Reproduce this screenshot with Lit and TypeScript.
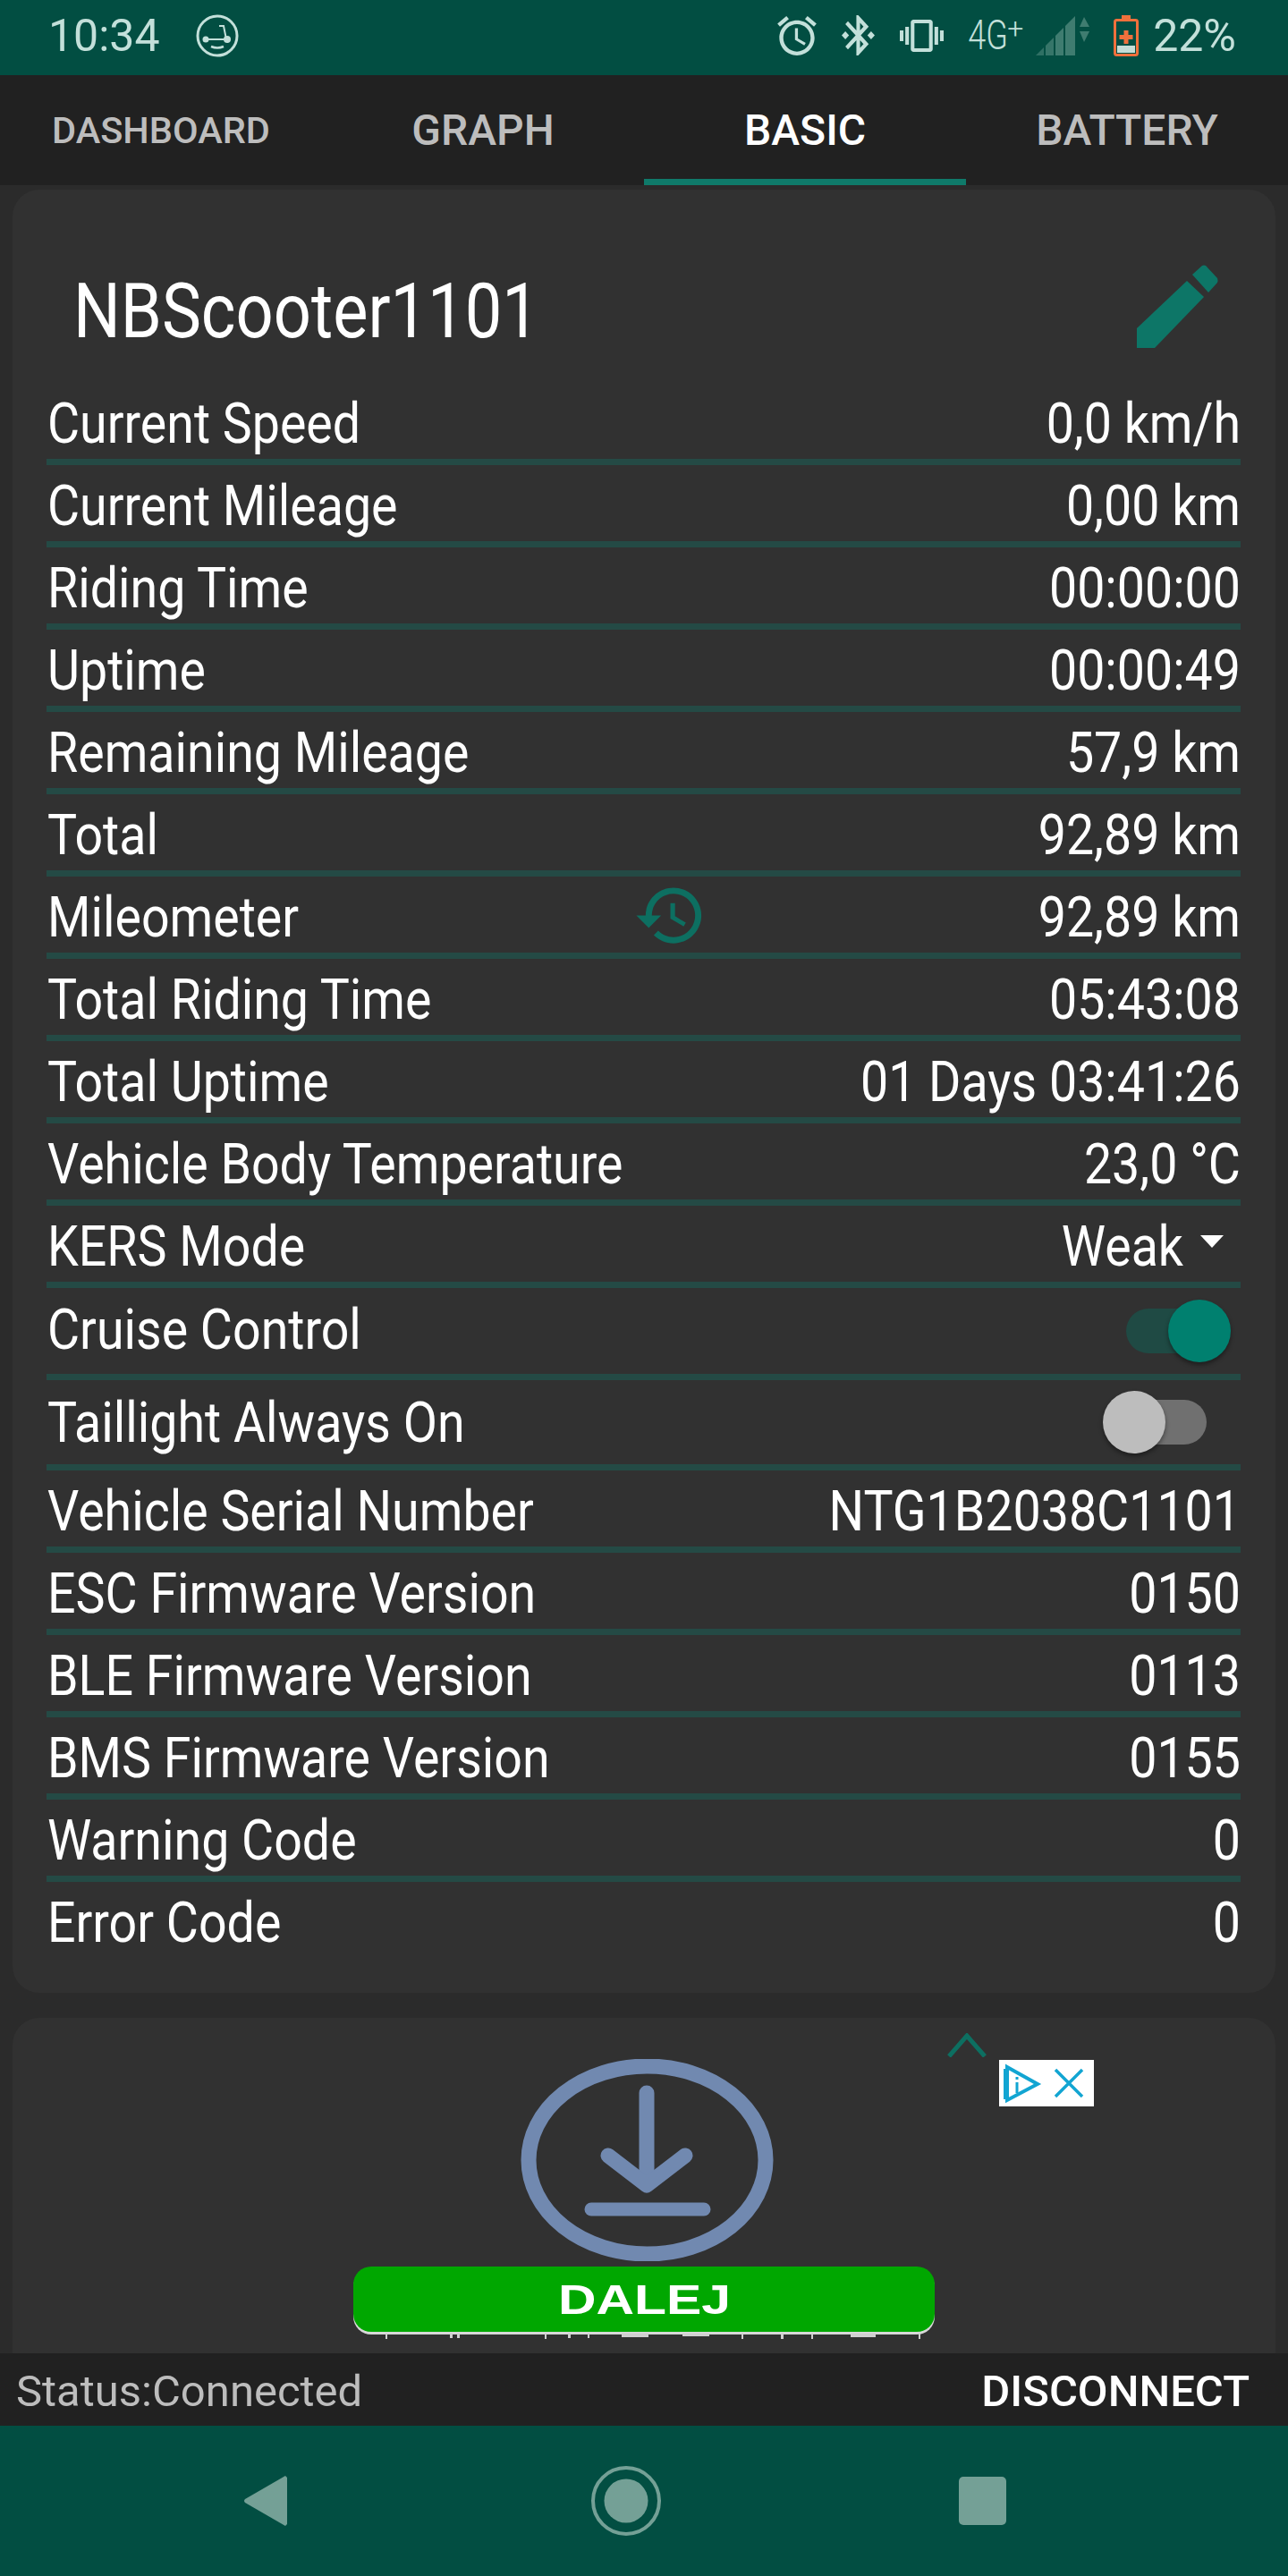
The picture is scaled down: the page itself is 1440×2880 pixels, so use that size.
import { LitElement, css, html, svg } from "lit";
import { customElement } from "lit/decorators.js";

interface Row {
    label: string;
    value?: string;
    kind?: "select" | "on" | "off";
    history?: boolean;
}

const ROWS: Row[] = [
    { label: "Current Speed", value: "0,0 km/h" },
    { label: "Current Mileage", value: "0,00 km" },
    { label: "Riding Time", value: "00:00:00" },
    { label: "Uptime", value: "00:00:49" },
    { label: "Remaining Mileage", value: "57,9 km" },
    { label: "Total", value: "92,89 km" },
    { label: "Mileometer", value: "92,89 km", history: true },
    { label: "Total Riding Time", value: "05:43:08" },
    { label: "Total Uptime", value: "01 Days 03:41:26" },
    { label: "Vehicle Body Temperature", value: "23,0 °C" },
    { label: "KERS Mode", value: "Weak", kind: "select" },
    { label: "Cruise Control", kind: "on" },
    { label: "Taillight Always On", kind: "off" },
    { label: "Vehicle Serial Number", value: "NTG1B2038C1101" },
    { label: "ESC Firmware Version", value: "0150" },
    { label: "BLE Firmware Version", value: "0113" },
    { label: "BMS Firmware Version", value: "0155" },
    { label: "Warning Code", value: "0" },
    { label: "Error Code", value: "0" },
];

const TABS = ["DASHBOARD", "GRAPH", "BASIC", "BATTERY"];

const scooterIcon = svg`<svg class="scooter" width="48" height="48" viewBox="0 0 48 48" fill="none" stroke="currentColor">
    <circle cx="24" cy="24" r="22" stroke-width="3"/>
    <path d="M26 13h5l3 15M11 28h23" stroke-width="2"/>
    <circle cx="11" cy="28" r="3.5" fill="currentColor" stroke="none"/>
    <circle cx="35" cy="28" r="4" fill="currentColor" stroke="none"/>
    <path d="M17 36q7 3 14 0" stroke-width="2.5"/>
</svg>`;

const alarmIcon = svg`<svg width="44" height="44" viewBox="2 1.86 20 20.14" fill="currentColor"><path d="M22 5.72l-4.6-3.86-1.29 1.53 4.6 3.86L22 5.72zM7.88 3.39L6.6 1.86 2 5.71l1.29 1.53 4.59-3.85zM12.5 8H11v6l4.75 2.85.75-1.23-4-2.37V8zM12 4c-4.97 0-9 4.03-9 9s4.03 9 9 9 9-4.03 9-9-4.03-9-9-9zm0 16c-3.87 0-7-3.13-7-7s3.13-7 7-7 7 3.13 7 7-3.13 7-7 7z"/></svg>`;

const bluetoothIcon = svg`<svg width="37" height="45" viewBox="3 2 18 20" preserveAspectRatio="none" fill="currentColor"><path d="M7 12l-2-2-2 2 2 2 2-2zm10.71-4.29L12 2h-1v7.59L6.41 5 5 6.41 10.59 12 5 17.59 6.41 19 11 14.41V22h1l5.71-5.71-4.3-4.29 4.3-4.29zM13 5.83l1.88 1.88L13 9.59V5.83zm1.88 10.46L13 18.17v-3.76l1.88 1.88zM19 10l-2 2 2 2 2-2-2-2z"/></svg>`;

const vibrateIcon = svg`<svg width="49" height="36" viewBox="0 3 24 18" preserveAspectRatio="none" fill="currentColor"><path d="M0 15h2V9H0v6zm3 2h2V7H3v10zm19-8v6h2V9h-2zm-3 8h2V7h-2v10zM16.5 3h-9C6.67 3 6 3.67 6 4.5v15c0 .83.67 1.5 1.5 1.5h9c.83 0 1.5-.67 1.5-1.5v-15c0-.83-.67-1.5-1.5-1.5zM16 19H8V5h8v14z"/></svg>`;

const signalIcon = svg`<svg width="61" height="44" viewBox="0 0 61 44">
    <g fill="#3f7c70">
        <path d="M0 44 9 35V44Z" opacity=".75"/>
        <path d="M11 33 20 24V44H11Z" opacity=".85"/>
        <path d="M22 22 31 13V44H22Z"/>
        <path d="M33 11 44 0V44H33Z"/>
        <path d="M54 1 60 12H49Z"/>
        <path d="M54 29 60 17H49Z"/>
    </g>
</svg>`;

const batteryIcon = svg`<svg width="28" height="46" viewBox="0 0 28 46">
    <path d="M9 0h10v4H9z" fill="#f0703c"/>
    <rect x="1.5" y="5.5" width="25" height="39" rx="2" fill="none" stroke="#f0703c" stroke-width="3"/>
    <rect x="4" y="34" width="20" height="8" fill="#c5ddd7"/>
    <path d="M11.5 17h5v5h5v5h-5v5h-5v-5h-5v-5h5z" fill="#f0703c"/>
</svg>`;

const editIcon = svg`<svg class="edit" width="91" height="93" viewBox="0 0 91 93" fill="#0d7667">
    <path d="M0 71 56 18 75 36 20 93H0Z"/>
    <path d="M62 11 73 1Q75 0 77 1L90 15Q91 18 90 20L80 31Z"/>
</svg>`;

const historyIcon = svg`<svg class="history" width="83" height="83" viewBox="0 0 24 24" fill="#0d6f61"><path d="M13 3c-4.97 0-9 4.03-9 9H1l3.89 3.89.07.14L9 12H6c0-3.87 3.13-7 7-7s7 3.13 7 7-3.13 7-7 7c-1.93 0-3.68-.79-4.94-2.06l-1.42 1.42C8.27 19.99 10.51 21 13 21c4.97 0 9-4.03 9-9s-4.03-9-9-9zm-1 5v5l4.28 2.54.72-1.21-3.5-2.08V8H12z"/></svg>`;

const downloadIcon = svg`<svg class="download" width="283" height="226" viewBox="0 0 283 226" fill="none" stroke="#7189b0" stroke-linecap="round">
    <ellipse cx="141.500" cy="113" rx="132.500" ry="105" stroke-width="17"/>
    <path d="M141 38V140" stroke-width="17"/>
    <path d="M98 108 141 141 184 108" stroke-width="17" stroke-linejoin="round"/>
    <path d="M79 168H205" stroke-width="15"/>
</svg>`;

const adChoices = svg`<svg width="106" height="52" viewBox="0 0 106 52" fill="none" stroke="#12a5d2" stroke-width="4">
    <path d="M9 8 43 27 9 45Z"/>
    <path d="M8 10V44" stroke-width="6"/>
    <path d="M20 25V37M20 19V22" stroke-width="3"/>
    <path d="M63 11 93 41M93 11 63 41" stroke-width="3.500"/>
</svg>`;

// scan-line leftovers under the green ad button
const adTicks = svg`<svg class="ticks" width="650" height="7" viewBox="0 0 650 7" fill="#d0d0d0">
    <path d="M36 0h2v6h-2zM108 0h3v5h-3zM116 0h3v5h-3zM214 0h2v6h-2zM240 0h3v5h-3zM262 0h2v5h-2zM300 0h30v4h-30zM368 0h30v3h-30zM434 0h2v6h-2zM478 0h3v6h-3zM512 0h2v6h-2zM556 0h28v4h-28zM632 0h2v6h-2z"/>
</svg>`;

@customElement("app-root")
export class AppRoot extends LitElement {
    static styles = css`
        :host {
            display: block;
            width: 1440px;
            height: 2880px;
            background: #2b2b2b;
            font-family: Roboto, "Liberation Sans", sans-serif;
            overflow: hidden;
        }

        .page {
            display: flex;
            flex-direction: column;
            height: 2880px;
        }

        .status {
            display: flex;
            align-items: center;
            height: 84px;
            flex: none;
            padding: 0 58px 5px 54px;
            box-sizing: border-box;
            background: #024e42;
            color: #c3e0da;
            font-size: 50px;
        }

        .status svg {
            display: block;
            flex: none;
        }

        .scooter {
            margin-left: 40px;
        }

        .spacer {
            flex: 1;
        }

        .status .gap28 {
            margin-left: 28px;
        }

        .net {
            position: relative;
            width: 67px;
            margin-left: 27px;
            font-size: 36px;
            font-weight: 300;
            line-height: 40px;
        }

        .net span {
            display: inline-block;
            transform: scaleY(1.28);
        }

        .net sup {
            position: absolute;
            left: 44px;
            top: -4px;
            font-size: 32px;
            line-height: 32px;
        }

        .status .signal {
            margin-left: 9px;
        }

        .status .battery {
            margin-left: 26px;
        }

        .level {
            margin-left: 16px;
        }

        .tabs {
            display: grid;
            grid-template-columns: repeat(4, 360px);
            flex: none;
            height: 123px;
            background: #212121;
        }

        .tab {
            display: flex;
            align-items: center;
            justify-content: center;
            box-sizing: border-box;
            color: #bdbdbd;
            font-size: 48px;
            font-weight: 500;
        }

        .tab.small {
            font-size: 41.500px;
        }

        .tab.active {
            color: #fff;
            border-bottom: 7px solid #0f7a6a;
            padding-top: 7px;
        }

        main {
            flex: 1;
            display: flex;
            flex-direction: column;
            gap: 28px;
            padding: 5px 14px 0;
        }

        .card {
            background: #313131;
            border-radius: 30px;
        }

        .info {
            height: 2016px;
            box-sizing: border-box;
            padding: 0 39px 0 38px;
        }

        .head {
            display: flex;
            align-items: center;
            justify-content: space-between;
            height: 216px;
            padding: 44px 25px 0 30px;
            box-sizing: border-box;
        }

        .name {
            color: #fff;
            font-size: 74px;
            display: inline-block;
            margin-top: 10px;
            transform: scaleY(1.15);
        }

        .row {
            position: relative;
            display: flex;
            align-items: center;
            justify-content: space-between;
            height: 92px;
            box-sizing: border-box;
            border-bottom: 7px solid #244a45;
            color: #fff;
            font-size: 55.500px;
        }

        .row.on {
            height: 103px;
        }

        .row.off {
            height: 101px;
        }

        .row.last {
            height: 85px;
            border-bottom: 0;
        }

        .txt {
            display: inline-block;
            margin-top: 5px;
            padding-left: 1px;
            transform: scaleY(1.15);
        }

        .row.on .txt {
            margin-top: -3px;
        }

        .row.off .txt {
            margin-top: 0;
        }

        .val {
            padding: 0;
        }

        .pick {
            display: flex;
            align-items: center;
            gap: 19px;
            padding-right: 19px;
        }

        .caret {
            width: 0;
            height: 0;
            margin-top: -6px;
            border-left: 13px solid transparent;
            border-right: 13px solid transparent;
            border-top: 14px solid #fff;
        }

        .history {
            position: absolute;
            left: 656px;
            top: 2px;
        }

        .switch {
            position: relative;
            width: 101px;
            height: 50px;
            border-radius: 25px;
        }

        .switch.on {
            margin-right: 27px;
            background: #1f4a44;
        }

        .switch.off {
            margin-right: 38px;
            background: #707070;
            width: 100px;
        }

        .knob {
            position: absolute;
            top: -10px;
            width: 70px;
            height: 70px;
            border-radius: 50%;
            box-shadow: 0 3px 5px rgba(0, 0, 0, 0.4);
        }

        .on .knob {
            right: -16px;
            background: #00806f;
        }

        .off .knob {
            left: -16px;
            background: #bdbdbd;
        }

        .ad {
            position: relative;
            flex: 1;
            display: flex;
            flex-direction: column;
            align-items: center;
            padding: 46px 0 0 0;
            border-radius: 30px 30px 0 0;
        }

        .download {
            display: block;
            margin-left: 6px;
        }

        .dalej {
            position: relative;
            display: flex;
            align-items: center;
            justify-content: center;
            width: 650px;
            height: 73px;
            margin-top: 6px;
            border-radius: 20px;
            background: #00a700;
            box-shadow: 0 3px 0 #d8d8d8;
            color: #fff;
            font-family: "Liberation Sans", sans-serif;
            font-size: 46px;
            font-weight: 700;
        }

        .dalej span {
            display: inline-block;
            transform: scaleX(1.28);
        }

        .ticks {
            position: absolute;
            left: 0;
            top: 75px;
        }

        .chevron {
            position: absolute;
            left: 1045px;
            top: 17px;
        }

        .badge {
            position: absolute;
            left: 1103px;
            top: 47px;
            width: 106px;
            height: 52px;
            background: #fff;
        }

        .badge svg {
            display: block;
        }

        .foot {
            display: flex;
            align-items: center;
            justify-content: space-between;
            flex: none;
            height: 81px;
            padding: 3px 43px 0 18px;
            box-sizing: border-box;
            background: #212121;
            color: #bdbdbd;
            font-size: 49px;
        }

        .foot b {
            color: #fff;
            font-size: 49px;
            font-weight: 500;
        }

        .nav {
            display: flex;
            align-items: center;
            flex: none;
            height: 168px;
            padding-left: 273px;
            box-sizing: border-box;
            background: #024e42;
        }

        .nav svg {
            display: block;
            flex: none;
        }

        .nav .home {
            margin-left: 340px;
        }

        .nav .recent {
            margin-left: 333px;
        }
    `;

    private renderValue(row: Row) {
        if (row.kind === "select") {
            return html`<div class="pick"><span class="txt">${row.value}</span><span class="caret"></span></div>`;
        }
        if (row.kind === "on" || row.kind === "off") {
            return html`<div class="switch ${row.kind}"><div class="knob"></div></div>`;
        }
        return html`<span class="txt val">${row.value}</span>`;
    }

    render() {
        return html`
            <div class="page">
                <div class="status">
                    <span>10:34</span>
                    ${scooterIcon}
                    <div class="spacer"></div>
                    ${alarmIcon}
                    <div class="gap28">${bluetoothIcon}</div>
                    <div class="gap28">${vibrateIcon}</div>
                    <div class="net"><span>4G</span><sup>+</sup></div>
                    <div class="signal">${signalIcon}</div>
                    <div class="battery">${batteryIcon}</div>
                    <span class="level">22%</span>
                </div>
                <div class="tabs">
                    ${TABS.map((t, i) => html`<div class="tab ${i === 0 ? "small" : ""} ${i === 2 ? "active" : ""}">${t}</div>`)}
                </div>
                <main>
                    <section class="card info">
                        <div class="head">
                            <span class="name">NBScooter1101</span>
                            ${editIcon}
                        </div>
                        ${ROWS.map((r, i) => html`
                            <div class="row ${r.kind ?? ""} ${i === ROWS.length - 1 ? "last" : ""}">
                                <span class="txt">${r.label}</span>
                                ${r.history ? historyIcon : ""}
                                ${this.renderValue(r)}
                            </div>
                        `)}
                    </section>
                    <section class="card ad">
                        ${downloadIcon}
                        <div class="dalej"><span>DALEJ</span>${adTicks}</div>
                        <svg class="chevron" width="44" height="27" viewBox="0 0 44 27" fill="none" stroke="#0d6f61" stroke-width="5"><path d="M2 26 22 3 42 26"/></svg>
                        <div class="badge">${adChoices}</div>
                    </section>
                </main>
                <div class="foot">
                    <span>Status:Connected</span>
                    <b>DISCONNECT</b>
                </div>
                <div class="nav">
                    <svg width="48" height="56" viewBox="0 0 48 56" fill="#74a096"><path d="M46 0 48 2V54L46 56 1 30Q-1 28 1 26Z"/></svg>
                    <svg class="home" width="78" height="78" viewBox="0 0 78 78"><circle cx="39" cy="39" r="37" fill="none" stroke="#74a096" stroke-width="4"/><circle cx="39" cy="39" r="24.500" fill="#74a096"/></svg>
                    <svg class="recent" width="53" height="54" viewBox="0 0 53 54"><rect width="53" height="54" rx="5" fill="#74a096"/></svg>
                </div>
            </div>
        `;
    }
}
